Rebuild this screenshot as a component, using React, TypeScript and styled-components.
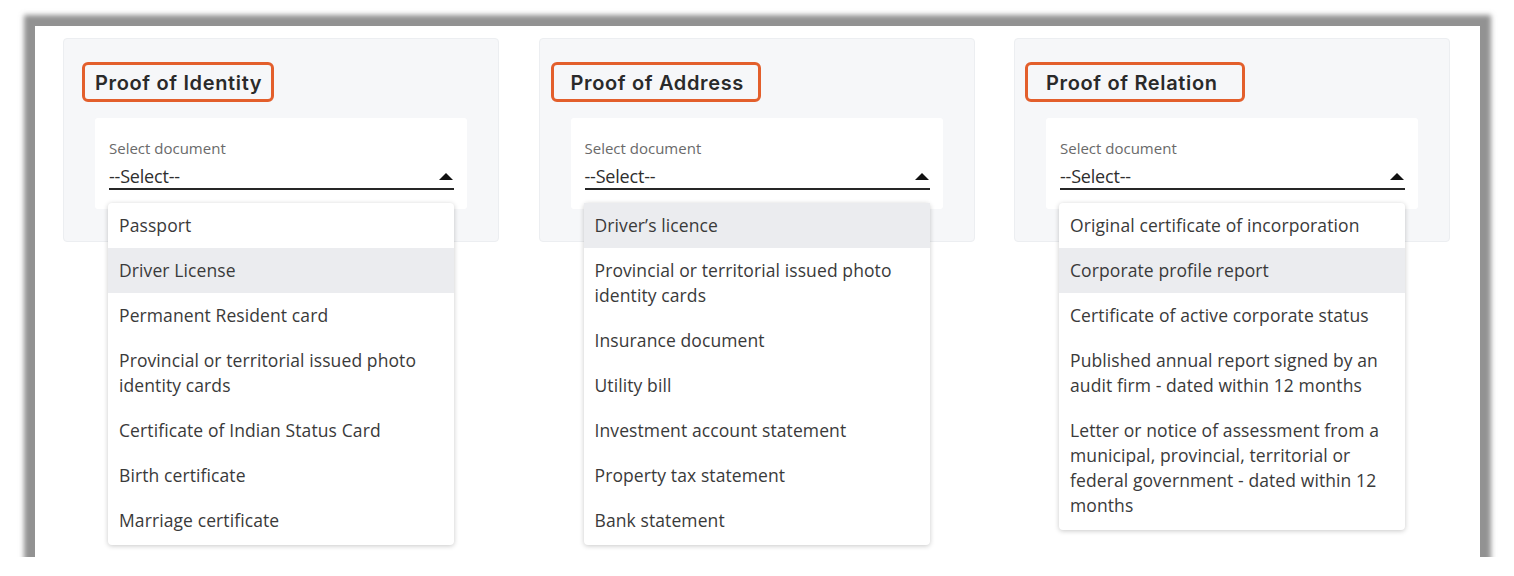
import React from "react";
import styled, { createGlobalStyle } from "styled-components";

const GlobalStyle = createGlobalStyle`
  html, body {
    margin: 0;
    padding: 0;
    background: #ffffff;
  }
  body {
    font-family: "Open Sans", "Liberation Sans", sans-serif;
  }
`;

const Page = styled.div`
  padding: 26px 0 0 35px;
`;

const Frame = styled.div`
  width: 1445px;
  height: 531px;
  box-sizing: border-box;
  background: #ffffff;
  box-shadow: 0 0 5px 11px rgba(110, 110, 110, 0.75);
  padding: 12px 0 0 28px;
  display: grid;
  grid-template-columns: repeat(3, 436px);
  column-gap: 39.5px;
  align-items: start;
`;

const Card = styled.section`
  position: relative;
  background: #f6f7f9;
  border: 1px solid #eceef1;
  border-radius: 4px;
  padding: 30px 31px 31px 31px;
  height: 204px;
  box-sizing: border-box;
`;

const Heading = styled.h2<{ $padL: number; $padR: number }>`
  position: relative;
  display: inline-block;
  margin: 0 0 21px;
  font-family: Inter, "Liberation Sans", sans-serif;
  font-weight: 600;
  font-size: 20px;
  line-height: 28px;
  color: #2a2a2a;
  letter-spacing: 0.65px;

  &::before {
    content: "";
    position: absolute;
    top: -7px;
    bottom: -5px;
    left: ${(p) => -p.$padL}px;
    right: ${(p) => -p.$padR}px;
    border: 3px solid #e35f2c;
    border-radius: 6px;
  }
`;

const SelectBox = styled.div`
  background: #ffffff;
  border-radius: 3px;
  padding: 20px 13px 19px 14px;
`;

const Field = styled.div`
  position: relative;
`;

const Label = styled.div`
  font-size: 15px;
  line-height: 20px;
  color: #6a6a6a;
  margin-bottom: 6px;
`;

const Control = styled.div`
  display: flex;
  align-items: center;
  justify-content: space-between;
  border-bottom: 2px solid #262626;
  font-size: 18px;
  line-height: 24px;
  color: #2e2e2e;
  letter-spacing: -0.2px;
`;

const Caret = styled.span`
  width: 0;
  height: 0;
  border-left: 7px solid transparent;
  border-right: 7px solid transparent;
  border-bottom: 7px solid #111111;
  margin-right: 1px;
`;

const Menu = styled.ul`
  position: absolute;
  top: 65px;
  left: -1px;
  right: 0;
  margin: 0;
  padding: 0 0 2px;
  list-style: none;
  background: #ffffff;
  border-radius: 4px;
  box-shadow: 0 1px 5px rgba(0, 0, 0, 0.22);
  z-index: 2;
`;

const Option = styled.li<{ $active?: boolean }>`
  padding: 10px 11px;
  font-size: 17.5px;
  line-height: 25px;
  letter-spacing: 0.1px;
  color: #3a3a3a;
  background: ${(p) => (p.$active ? "#ebecef" : "transparent")};
`;

type Group = {
  title: string;
  padL: number;
  padR: number;
  options: string[];
  active: number;
};

const groups: Group[] = [
  {
    title: "Proof of Identity",
    padL: 13,
    padR: 12,
    active: 1,
    options: [
      "Passport",
      "Driver License",
      "Permanent Resident card",
      "Provincial or territorial issued photo identity cards",
      "Certificate of Indian Status Card",
      "Birth certificate",
      "Marriage certificate",
    ],
  },
  {
    title: "Proof of Address",
    padL: 20,
    padR: 17,
    active: 0,
    options: [
      "Driver\u2019s licence",
      "Provincial or territorial issued photo identity cards",
      "Insurance document",
      "Utility bill",
      "Investment account statement",
      "Property tax statement",
      "Bank statement",
    ],
  },
  {
    title: "Proof of Relation",
    padL: 21,
    padR: 27,
    active: 1,
    options: [
      "Original certificate of incorporation",
      "Corporate profile report",
      "Certificate of active corporate status",
      "Published annual report signed by an audit firm - dated within 12 months",
      "Letter or notice of assessment from a municipal, provincial, territorial or federal government - dated within 12 months",
    ],
  },
];

const DocumentCard: React.FC<{ group: Group }> = ({ group }) => (
  <Card>
    <Heading $padL={group.padL} $padR={group.padR}>
      {group.title}
    </Heading>
    <SelectBox>
      <Field>
        <Label>Select document</Label>
        <Control>
          <span>--Select--</span>
          <Caret />
        </Control>
        <Menu>
          {group.options.map((o, i) => (
            <Option key={o} $active={i === group.active}>
              {o}
            </Option>
          ))}
        </Menu>
      </Field>
    </SelectBox>
  </Card>
);

export default function App() {
  return (
    <>
      <GlobalStyle />
      <Page>
        <Frame>
          {groups.map((g) => (
            <DocumentCard key={g.title} group={g} />
          ))}
        </Frame>
      </Page>
    </>
  );
}
